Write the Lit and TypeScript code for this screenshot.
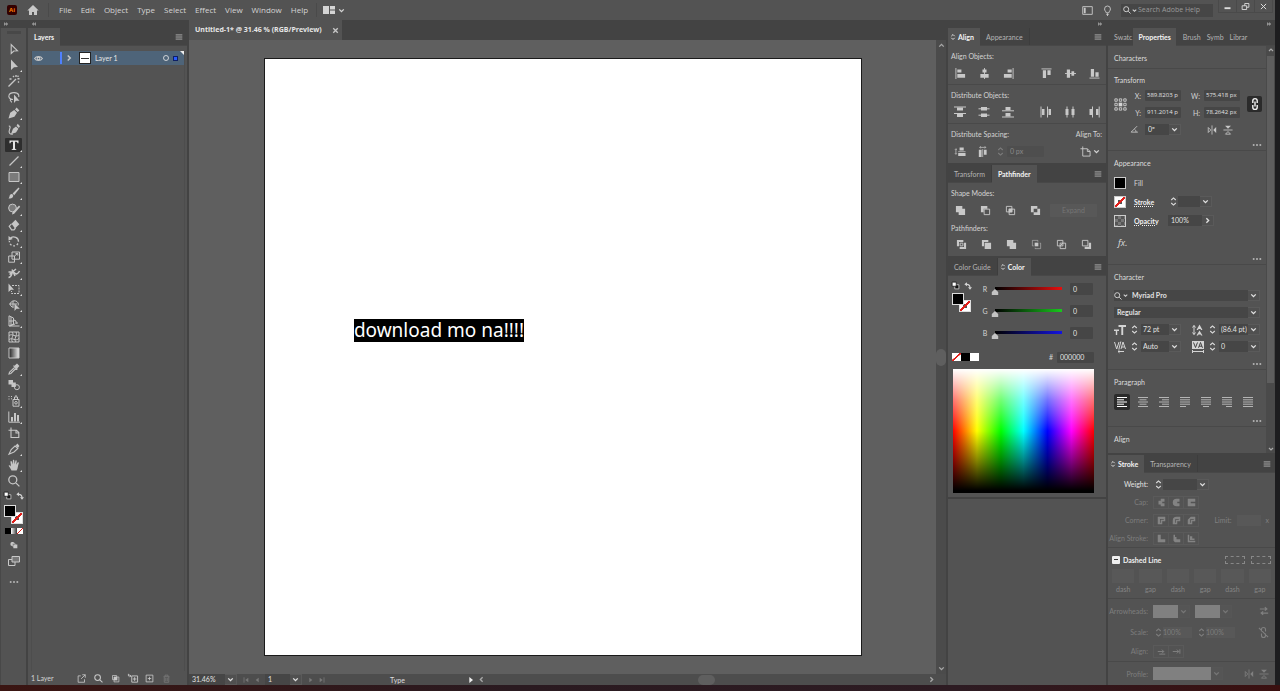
import { LitElement, html, svg, css, nothing, TemplateResult } from "lit";
import { customElement, state } from "lit/decorators.js";
import { classMap } from "lit/directives/class-map.js";
import { styleMap } from "lit/directives/style-map.js";

type Glyph = ReturnType<typeof svg>;

// All glyphs are drawn on a 12 x 12 grid; "f" is filled, "s" is stroked.
const f = (d: string): Glyph => svg`<path d=${d} fill="currentColor"/>`;
const s = (d: string, w = 1): Glyph =>
  svg`<path d=${d} fill="none" stroke="currentColor" stroke-width=${w}/>`;
const fs = (fill: string, line: string, w = 1): Glyph => svg`${f(fill)}${s(line, w)}`;

const GLYPHS: Record<string, Glyph> = {
  home: f("M6 1L0.3 6.4H2V11H5V8H7V11H10V6.4H11.7Z"),
  workspace: f("M0 2H6V10H0ZM7 2H12V5.5H7ZM7 6.5H12V10H7Z"),
  chevron: s("M3 4.5L6 7.5L9 4.5", 1.8),
  right: s("M4.5 3L7.5 6L4.5 9", 1.8),
  left: s("M7.5 3L4.5 6L7.5 9", 1.8),
  up: s("M3 7.5L6 4.5L9 7.5", 1.8),
  updown: s("M3 4L6 1.2L9 4M3 8L6 10.8L9 8", 1.5),
  tabmark: s("M4 5L6 3L8 5M4 7L6 9L8 7", 1),
  menu: s("M2 3.5H10M2 6H10M2 8.5H10", 1),
  collapse: s("M6 3.5L3 6L6 8.5M10 3.5L7 6L10 8.5", 1.6),
  expand: s("M2 3.5L5 6L2 8.5M6 3.5L9 6L6 8.5", 1.6),
  dots: f("M1 5H3V7H1ZM5 5H7V7H5ZM9 5H11V7H9Z"),
  close: s("M3 3L9 9M9 3L3 9", 1.8),
  thinclose: s("M2.5 2.5L9.5 9.5M9.5 2.5L2.5 9.5", 1.3),
  minimize: f("M2 7H10V9.5H2Z"),
  restore: s("M1.5 5H7.5V10H1.5ZM5 5V2H10.5V7H7.5", 1.2),
  sidebar: fs("M2 3H4V9H2Z", "M0.8 1.8H11.2V10.2H0.8Z"),
  bulb: s("M4.5 8.5C4.5 7 2.8 6.4 2.8 4.3A3.2 3.2 0 0 1 9.2 4.3C9.2 6.4 7.5 7 7.5 8.5ZM4.7 10.3H7.3M6 9V12", 1),
  search: s("M7.8 7.8L11.3 11.3M8.6 4.8A3.8 3.8 0 1 1 1 4.8A3.8 3.8 0 1 1 8.6 4.8", 1.4),
  // toolbar
  select: s("M3.2 1.5V10.5L5.8 8L9.5 7.8Z", 1.1),
  direct: f("M3 0.5V11L6 8.3L10 8Z"),
  wand: s("M0.5 11.5L8 4M8 0V2M11.5 3.8H9.5M5 1L6 2M10.5 0.8L9.5 1.8M10 6.5L11 7.5M1.5 4H3.5", 1.4),
  lasso: fs("M6 3.5V12L8 9.8H11.5Z", "M5 8.5C1 8.5 0.5 5.5 1 4.2C2 1 9.5 0.5 10.7 4C11 5 11 5.5 10.6 6M3 8C1 10 4 10 3.5 11.5", 1.1),
  pen: f("M0.5 11.5L2.2 5.8L6.2 3L9 5.8L6.4 9.8ZM7 2.4L8.6 0.6L11.4 3.4L9.7 5Z"),
  curvature: fs("M3 11L5 5.8L8 3.5L10.4 5.8L8 9.5ZM8.6 2.8L9.7 0.8L12 3.2L10.8 4.9Z", "M0.8 3C3 3 2 5 1.4 7C0.4 10 2 11.5 5 11", 1.1),
  type: f("M1.5 1.5H10.5V4.3H9.5C9.3 3 9 2.7 7 2.7V9C7 10 7.3 10.2 8.3 10.3V11H3.7V10.3C4.7 10.2 5 10 5 9V2.7C3 2.7 2.7 3 2.5 4.3H1.5Z"),
  line: s("M1.5 10.5L10.5 1.5", 1.3),
  rect: svg`<path d="M1 1.5H11V10.5H1Z" fill="#7b7b7b" stroke="currentColor"/>`,
  brush: f("M0.5 11.5C2 10 1 8 3 7.2C4.5 6.8 5.8 8 5 9.7C4.2 11.3 2 11.6 0.5 11.5ZM4.6 6.4L10.5 0.5L11.5 1.5L6.2 8.2Z"),
  shaper: svg`<path d="M8.4 5A3.9 3.9 0 1 1 0.6 5A3.9 3.9 0 1 1 8.4 5" fill="#7b7b7b" stroke="currentColor"/>${f("M4.5 9.5L11 2.5L12.2 3.7L6.2 10.8L4 11.4Z")}`,
  eraser: fs("M3.5 4.8L7.5 0.8L11.3 5.2L7 9.5Z", "M3.5 4.8L1.2 7.2L3.6 10.8H6L7.5 9", 1.2),
  rotate: fs("M0.5 1V5.5L4.8 4Z", "M2.5 3.2C5.5 0.5 10.8 2.5 10.5 6.8M10 8.5L8.8 10M7 10.8L5.2 10.9M3.5 10.3L2 9M1.4 7.3V6", 1.3),
  scale: s("M4 1H11.5V8.2H4ZM0.7 5H6.5V11.2H0.7ZM6.5 5L9.6 2.5M7.5 2.4H9.8V4.6", 1),
  width: s("M0.5 10.5C5 10 3 3 6 5.5C8 8 10 7 11.5 4M1.5 7.5L8 2M4 2.5L7 9M0.5 5H4", 1.5),
  free: svg`${f("M0.5 0.5V9L3 6.8H6Z")}<path d="M4 2.5H11V10.5H3.5V8" fill="none" stroke="currentColor" stroke-dasharray="2 1"/>`,
  shapebuild: fs("M6.5 4.5V12L8.5 9.8H11.8Z", "M5.5 8.5A4 3.4 0 1 1 10 6.5M1 5H9M5 2V8", 1),
  perspective: s("M1 0.8V11H11.5M1 0.8L5.5 3V9L1 11M1 6H6M3 2V10M6 5L8 6V9M8 8H10M2 11L7 9", 1),
  mesh: svg`${s("M1 1H11V11H1ZM1 4.5C5 2 7 7 11 4M1 8.5C5 6 7 11 11 7.5M4 1C7 4 2 7 4.5 11M8 1C10 4 5 8 8 11", 1)}`,
  gradient: svg`<defs><linearGradient id="g"><stop offset="0" stop-color="#222"/><stop offset="1" stop-color="#eee"/></linearGradient></defs><path d="M1 1H11V11H1Z" fill="url(#g)" stroke="currentColor"/>`,
  dropper: fs("M6.2 3L9 0.6L11.4 3L9 5.8Z", "M7 4L1.5 9.2L1 11L2.8 10.5L8.3 5M5.5 2.6L9.4 6.5", 1.1),
  blend: fs("M0.5 1H5V5.5H0.5ZM3.5 3.5H7.8V8H3.5Z", "M11.4 8.2A2.5 2.5 0 1 1 6.4 8.2A2.5 2.5 0 1 1 11.4 8.2", 1),
  spray: s("M5 4.5H11V11.2H5ZM6.5 4.5V2H9.5V4.5M9.3 7.8A1.3 1.3 0 1 1 6.7 7.8A1.3 1.3 0 1 1 9.3 7.8M0.5 1.5H1.5M3 1.5H4M0.5 4H1.5M3 3.8H4M7 1H9", 1),
  graph: fs("M3 6H5V10.5H3ZM6 2H8V10.5H6ZM9 4H11V10.5H9Z", "M0.8 0.5V11.2H12", 1),
  artboard: s("M3 0.5V10.5H10.8V5.5L8.5 3.2H0.5M8 3.5V6H10.5", 1.1),
  slice: fs("M7.5 2.5L9.5 0.6L11.4 3L10 5Z", "M7 3L9.8 5.4L6 9L1 11.2L3.2 6.5Z", 1.1),
  hand: f("M3.5 11.5C2.5 9.5 1.5 8 0.6 6.8C1 5.8 2.2 6.2 3 7.4L2.4 2.6C2.9 1.7 3.7 2 4 3L4.6 5.4L4.9 1.2C5.4 0.4 6.2 0.6 6.3 1.4L6.5 5.2L7.5 1.5C8.2 0.9 8.8 1.3 8.7 2.2L8.2 5.8L9.8 3.3C10.6 3 11 3.6 10.7 4.4C9.8 6.5 10 9.5 8.6 11.5Z"),
  zoom: s("M7.6 7.6L11.4 11.4M8.8 4.8A4 4 0 1 1 0.8 4.8A4 4 0 1 1 8.8 4.8", 1.3),
  defaults: svg`<path d="M5 5H10.5V10.5H5Z" fill="#111" stroke="#ddd"/><path d="M1.5 1.5H7V7H1.5Z" fill="#fff" stroke="#111"/>`,
  swap: fs("M0.5 3.5L4.5 0.5V6.5ZM9 11.8L6 8H12Z", "M4 3.5C7.5 3.5 9 5 9 8.5", 1.7),
  drawmode: fs("M5 5.2H11V11H5ZM4.2 1.5A3 3 0 1 0 4 7.4V4H7.2A3 3 0 0 0 4.2 1.5", "M3.8 4.2H8V8H3.8Z", 0.7),
  screen: svg`<path d="M0.5 4.5H7V10.5H0.5Z" fill="none" stroke="currentColor"/><path d="M4 1.5H11.5V7H4Z" fill="#777" stroke="currentColor"/>`,
  // layers panel
  eye: s("M0.8 6C3 2.5 9 2.5 11.2 6C9 9.5 3 9.5 0.8 6ZM7.7 6A1.7 1.7 0 1 1 4.3 6A1.7 1.7 0 1 1 7.7 6", 1.4),
  ring: s("M9 6A3 3 0 1 1 3 6A3 3 0 1 1 9 6", 1),
  export: s("M5 2.5H1.5V11H10V7M5.5 6.5L11 1M7 1H11V5", 1.1),
  clip: fs("M4 4H8.5V8.5H4Z", "M2 2H7.5V4M2 2V7.5H4M4 4H10.5V10.5H4Z", 1),
  sublayer: s("M4.5 3.5H11.5V11H4.5ZM8 5V9.5M5.8 7.2H10.2M0.5 1V3.5H3M2 5L3.5 3.5L2 2", 1.1),
  add: s("M1.5 1.5H10.5V10.5H1.5ZM6 3.7V8.3M3.7 6H8.3", 1.1),
  trash: s("M2 3.5H10M4 3V1.5H8V3M3 4V11H9V4M5 5V9.5M7 5V9.5", 1),
  // status bar
  first: fs("M9.5 2.5V9.5L5 6Z", "M3 2V10", 1.2),
  prev: f("M8.5 2.5V9.5L4 6Z"),
  next: f("M3.5 2.5V9.5L8 6Z"),
  last: fs("M2.5 2.5V9.5L7 6Z", "M9 2V10", 1.2),
  play: f("M3.5 1.5V10.5L9 6Z"),
  // align
  alLeft: fs("M2.5 1.5H7V5H2.5ZM2.5 6.5H11V10.5H2.5Z", "M1 0V12"),
  alHc: fs("M3.8 1.5H8.2V5H3.8ZM1.5 6.5H10.5V10.5H1.5Z", "M6 0V12"),
  alRight: fs("M5 1.5H9.5V5H5ZM1 6.5H9.5V10.5H1Z", "M11 0V12"),
  alTop: fs("M2 2.5H5.5V11H2ZM7 2.5H10.5V7.5H7Z", "M0.5 1H11.5"),
  alVc: fs("M2 1.5H5.5V10.5H2ZM7 3.5H10V8.5H7Z", "M0 6H12"),
  alBot: fs("M2 1H5.5V9.5H2ZM7 4.5H10.5V9.5H7Z", "M0.5 11H11.5"),
  diTop: fs("M3 1.5H9V4.5H3ZM3 8H9V11H3Z", "M0 1H12M0 7.5H12"),
  diVc: fs("M3 1H9V4.5H3ZM3 7.5H9V11H3Z", "M0.5 2.8H11.5M0.5 9.2H11.5"),
  diBot: fs("M3.5 1H8.5V4.2H3.5ZM3.5 7H8.5V10.5H3.5Z", "M0 4.8H12M0 11H12"),
  diLeft: fs("M2 3H4.5V9H2ZM8.5 3H11V9H8.5Z", "M1 0.5V11.5M7.5 0.5V11.5"),
  diHc: fs("M1.5 3H4.5V9H1.5ZM7.5 3H10.5V9H7.5Z", "M3 0.5V11.5M9 0.5V11.5"),
  diRight: fs("M1.5 3H4V9H1.5ZM8 3H10.5V9H8Z", "M4.5 0.5V11.5M11.2 0.5V11.5"),
  spV: fs("M5 1.5H9.5V5H5ZM3.5 7.5H11.5V11H3.5Z", "M3.5 6.2H11.5M1 3V9M0 4L1 3L2 4M0 8L1 9L2 8", 0.8),
  spH: fs("M2 4H5V12H2ZM7.5 4H10.5V9.5H7.5Z", "M6.2 3.5V12M3 1.5H9.5M4 0.3L3 1.5L4 2.7M8.5 0.3L9.5 1.5L8.5 2.7", 0.8),
  alignTo: s("M3 0.5V11H11V6L8 3H0.5M8 3V6H11", 1),
  // pathfinder
  unite: f("M1 1H8V4H11V11H4V8H1Z"),
  minus: fs("M1 1H8V4H4V8H1Z", "M4.5 4.5H10.5V10.5H4.5Z"),
  intersect: fs("M4 4H8V8H4Z", "M1.5 1.5H7.5V7.5H1.5ZM4.5 4.5H10.5V10.5H4.5Z"),
  exclude: f("M1 1H8V4H4V8H1ZM8 4H11V11H4V8H8Z"),
  divide: svg`<path d="M1 1H8V3.3H3.3V8H1ZM8.7 4H11V11H4V8.7H8.7Z" fill="currentColor"/>${s("M4.5 4.5H7.5V7.5H4.5Z", 1)}`,
  trim: f("M1 1H8V3.3H3.3V8H1ZM4 4H11V11H4Z"),
  merge: f("M1 1H8V4H11V11H4V8H1Z"),
  crop: svg`${f("M4 4H8V8H4Z")}<path d="M1.5 1.5H7.5V3M1.5 1.5V7.5H3M9.5 4.5H10.5V10.5H4.5V9.5" fill="none" stroke="currentColor" opacity=".6"/>`,
  outline: s("M1.5 1.5H7.5V7.5H1.5ZM4.5 4.5H10.5V10.5H4.5ZM4.5 7.5L7.5 4.5"),
  back: fs("M8.5 4H11V11H4V8.5H8.5Z", "M1.5 1.5H7.5V7.5H1.5Z"),
  // properties
  refpoint: svg`${s("M0.8 0.8H3V3H0.8ZM4.9 0.8H7.1V3H4.9ZM9 0.8H11.2V3H9ZM0.8 4.9H3V7.1H0.8ZM9 4.9H11.2V7.1H9ZM0.8 9H3V11.2H0.8ZM4.9 9H7.1V11.2H4.9ZM9 9H11.2V11.2H9Z", 0.8)}${f("M4.3 4.3H7.7V7.7H4.3Z")}`,
  link: s("M3.8 5V2.8A2.2 2.2 0 0 1 8.2 2.8V5M3.8 7V9.2A2.2 2.2 0 0 0 8.2 9.2V7M6 3.5V8.5", 1.4),
  unlink: s("M3.8 5V2.8A2.2 2.2 0 0 1 8.2 2.8V5M3.8 7V9.2A2.2 2.2 0 0 0 8.2 9.2V7M1 1L11 11", 1.2),
  angle: s("M9.5 1.5L1.5 9.5H10.5M6 5.5C7.5 6.5 8 8 8 9.5", 1.1),
  flipH: fs("M11 2.5V9.5L7.5 6Z", "M6 0.5V11.5M1.5 3V9L4.5 6Z", 1),
  flipV: fs("M2.5 1H9.5L6 4.5Z", "M0.5 6H11.5M3 11H9L6 7.8Z", 1),
  size: f("M0 5.5H5V7H3.2V11H1.8V7H0ZM4.5 1H12V3H9.2V11H7.3V3H4.5Z"),
  leading: fs("M4.5 6L7.5 0.5L10.5 6H9L8.5 5H6.5L6 6ZM4.5 11.5L7.5 6.5L10.5 11.5H9L8.5 10.5H6.5L6 11.5Z", "M2 1.5V10.5M0.5 3.5L2 1.5L3.5 3.5M0.5 8.5L2 10.5L3.5 8.5", 1),
  kerning: s("M0.5 1L2.7 8L5 1M7 8L9 1L11.5 8M7.8 6H10.5M6.8 0.5L4.8 8.5M4 10.5H10M5.5 9.2L4 10.5L5.5 11.8", 1),
  tracking: svg`<path d="M0 0H12V8H0Z" fill="currentColor"/><path d="M1.5 1.5L3.5 6.5L5.5 1.5M6.5 6.8L8.5 1.5L10.5 6.8M7 5.2H10" fill="none" stroke="#444"/>${s("M0.5 9V12M11.5 9V12M1 10.5H11")}`,
  pLeft: s("M1 1.5H11M1 3.8H8M1 6H11M1 8.2H8M1 10.5H11"),
  pCenter: s("M1 1.5H11M2.5 3.8H9.5M1 6H11M2.5 8.2H9.5M1 10.5H11"),
  pRight: s("M1 1.5H11M4 3.8H11M1 6H11M4 8.2H11M1 10.5H11"),
  pJust: s("M1 1.5H11M1 3.8H11M1 6H11M1 8.2H11M1 10.5H7"),
  pJustC: s("M1 1.5H11M1 3.8H11M1 6H11M1 8.2H11M3 10.5H9"),
  pJustR: s("M1 1.5H11M1 3.8H11M1 6H11M1 8.2H11M5 10.5H11"),
  pJustA: s("M1 1.5H11M1 3.8H11M1 6H11M1 8.2H11M1 10.5H11"),
  // stroke
  capButt: f("M5 1H10V5H7V7H10V11H5V8.5H2V3.5H5Z"),
  capRound: f("M6 1H10V5H7V7H10V11H6A5 5 0 0 1 6 1Z"),
  capSquare: svg`<path d="M1 1H11V11H1ZM5 5V7H11V5Z" fill="currentColor" fill-rule="evenodd"/>`,
  corMiter: svg`<path d="M1 1H11V7H7V11H1ZM4 4V9H5V5H9V4Z" fill="currentColor" fill-rule="evenodd"/>`,
  corRound: svg`<path d="M6 1H11V7H7V11H1V6A5 5 0 0 1 6 1ZM4 5V9H5V5H9V4H5Z" fill="currentColor" fill-rule="evenodd"/>`,
  corBevel: svg`<path d="M5 1H11V7H7V11H1V5ZM4 5V9H5V5H9V4H5Z" fill="currentColor" fill-rule="evenodd"/>`,
  strC: f("M1 1H5V7H11V11H1Z"),
  strI: f("M2 1H4V4H6V7H11V9H2ZM2 9H11V11H4Z"),
  strO: f("M1 1H3V9H11V11H1ZM4 3H7V6H10V8H4Z"),
  exchange: s("M1 3.5H9.5M7 1.5L9.5 3.5L7 5.5M11 8.5H2.5M5 6.5L2.5 8.5L5 10.5", 1.3),
  arrowA: s("M1 6H9M6.5 3.5L9 6L6.5 8.5M3 9.5H11", 1.2),
  arrowB: s("M1 6H9M6.5 3.5L9 6L6.5 8.5M10.5 3V9", 1.2),
};

const icon = (name: string, size = 10): TemplateResult =>
  html`<svg class="ic" width=${size} height=${size} viewBox="0 0 12 12" aria-hidden="true">${GLYPHS[name]}</svg>`;

const iconButton = (name: string, label: string, size = 10, cls = ""): TemplateResult =>
  html`<button class="ib ${cls}" aria-label=${label}>${icon(name, size)}</button>`;

const drop = (label: string, value: string, cls = "", disabled = false, arrow = "chevron"): TemplateResult =>
  html`<span class="drop ${cls}">
    <select aria-label=${label} ?disabled=${disabled}><option>${value}</option></select>
    <span class="arrow">${icon(arrow, 9)}</span>
  </span>`;

const moreRow = (): TemplateResult => html`<div class="more">${iconButton("dots", "More options", 10)}</div>`;

interface Tool { id: string; label: string; group?: boolean }

const TOOLS: Tool[] = [
  { id: "select", label: "Selection" },
  { id: "direct", label: "Direct Selection", group: true },
  { id: "wand", label: "Magic Wand" },
  { id: "lasso", label: "Lasso" },
  { id: "pen", label: "Pen", group: true },
  { id: "curvature", label: "Curvature" },
  { id: "type", label: "Type", group: true },
  { id: "line", label: "Line Segment", group: true },
  { id: "rect", label: "Rectangle", group: true },
  { id: "brush", label: "Paintbrush", group: true },
  { id: "shaper", label: "Shaper", group: true },
  { id: "eraser", label: "Eraser", group: true },
  { id: "rotate", label: "Rotate", group: true },
  { id: "scale", label: "Scale", group: true },
  { id: "width", label: "Width", group: true },
  { id: "free", label: "Free Transform", group: true },
  { id: "shapebuild", label: "Shape Builder", group: true },
  { id: "perspective", label: "Perspective Grid", group: true },
  { id: "mesh", label: "Mesh" },
  { id: "gradient", label: "Gradient" },
  { id: "dropper", label: "Eyedropper", group: true },
  { id: "blend", label: "Blend" },
  { id: "spray", label: "Symbol Sprayer", group: true },
  { id: "graph", label: "Column Graph", group: true },
  { id: "artboard", label: "Artboard" },
  { id: "slice", label: "Slice", group: true },
  { id: "hand", label: "Hand", group: true },
  { id: "zoom", label: "Zoom" },
];

const MENUS = ["File", "Edit", "Object", "Type", "Select", "Effect", "View", "Window", "Help"];

@customElement("app-root")
export class AppRoot extends LitElement {
  @state() private tool = "type";

  static styles = css`
    :host {
      display: flex;
      flex-direction: column;
      height: 100vh;
      overflow: hidden;
      background: linear-gradient(90deg, #3a1512, #2a1a20 40%, #2d1b22 75%, #3a1010);
      color: #d4d4d4;
      font: 7px/10px Lato, "Open Sans", sans-serif;
    }
    * { box-sizing: border-box; }
    button, input, select {
      font: inherit;
      color: inherit;
      border: 0;
      margin: 0;
      padding: 0;
      background: none;
      border-radius: 0;
      appearance: none;
      min-width: 0;
      outline: none;
    }
    .ic { display: block; flex: none; overflow: visible; }
    .ib { display: grid; place-items: center; flex: none; color: #c8c8c8; }
    .fill { flex: 1; min-width: 0; }
    .frame { display: flex; flex: 1; min-height: 0; padding-bottom: 6px; }
    .window {
      display: flex;
      flex-direction: column;
      flex: 1;
      min-width: 0;
      background: #535353;
    }
    .desktop { width: 5px; background: #1d1d1f; }

    /* menu bar */
    .menubar {
      display: flex;
      align-items: center;
      height: 20px;
      flex: none;
      padding-left: 7px;
      font: 8px/12px "Open Sans", sans-serif;
      background: #535353;
    }
    .badge {
      width: 10px;
      height: 10px;
      margin-right: 10px;
      border-radius: 2px;
      background: #330000;
      color: #ff7c00;
      font: 700 6px/10px "Open Sans", sans-serif;
      text-align: center;
    }
    .sep { width: 1px; height: 14px; background: #4a4a4a; }
    .menus { display: flex; gap: 9px; padding: 0 8px 0 10px; }
    .menubar .sep.a { margin-left: 9px; }
    .spaces { display: flex; align-items: center; gap: 2px; padding-left: 6px; }
    .helpers { display: flex; gap: 9px; }
    .help {
      display: flex;
      align-items: center;
      width: 92px;
      height: 13px;
      margin: 0 6px 0 8px;
      padding-left: 2px;
      background: #464646;
      font: 7px/12px "Open Sans", sans-serif;
    }
    .help input { width: 70px; color: #a6a6a6; }
    .help input::placeholder { color: #9a9a9a; opacity: 1; }
    .winbtns { display: flex; align-self: flex-start; padding-right: 2px; }
    .winbtns .ib { width: 19px; height: 13px; border: 1px solid #4a4a4a; border-top: 0; margin-left: -1px; color: #ddd; }

    /* main columns */
    .main { display: flex; flex: 1; min-height: 0; background: #434343; }
    .dockhead { display: flex; align-items: center; height: 8px; flex: none; padding: 0 3px; color: #ddd; background: #434343; }
    .dockhead.end { justify-content: flex-end; }
    .col { display: flex; flex-direction: column; flex: none; }
    .tools { width: 26px; }
    .toolbar {
      display: flex;
      flex-direction: column;
      flex: 1;
      align-items: center;
      background: #535353;
      border-left: 1px solid #484848;
    }
    .grip { width: 14px; height: 3px; margin: 3px 0 7px; background: #484848; flex: none; }
    .tool {
      position: relative;
      display: grid;
      place-items: center;
      width: 19px;
      height: 16px;
      flex: none;
      color: #c6c6c6;
      border: 1px solid transparent;
      border-radius: 2px;
    }
    .tool.on { background: #2e2e2e; background-clip: padding-box; color: #e4e4e4; }
    .tool.group::after {
      content: "";
      position: absolute;
      right: 0;
      bottom: 0;
      border: 1px solid;
      border-color: transparent #ddd #ddd transparent;
    }
    .toolpair { display: flex; justify-content: space-between; align-items: center; width: 21px; height: 13px; margin-bottom: 3px; flex: none; }
    .swatches { position: relative; width: 19px; height: 19px; flex: none; }
    .sw { position: absolute; width: 12px; height: 12px; border: 1px solid #ddd; }
    .sw.fillc { left: 0; top: 0; background: #000; }
    .none { background: linear-gradient(to bottom right, #fff 42%, #e0201b 44%, #e0201b 56%, #fff 58%); }
    .sw.strokec { right: 0; bottom: 0; }
    .sw.strokec::after, .hollow::after {
      content: "";
      position: absolute;
      inset: 3px;
      background: linear-gradient(to bottom right, #535353 30%, #e0201b 32%, #e0201b 68%, #535353 70%);
    }
    .modes { display: flex; width: 18px; height: 6px; margin: 4px 0 3px; flex: none; }
    .modes button { width: 6px; height: 6px; }
    .black { background: #000; }
    .white { background: #fff; }
    .grad { background: linear-gradient(90deg, #fff, #333); }
    .toolbar .ib { height: 16px; width: 19px; }
    .toolbar .ib.last { margin-top: 5px; }

    /* panels */
    .tabs { display: flex; height: 18px; flex: none; background: #434343; border-bottom: 1px solid #484848; }
    .tab {
      display: flex;
      align-items: center;
      padding: 0 6px;
      color: #b4b4b4;
      border-right: 1px solid #3d3d3d;
      white-space: nowrap;
    }
    .tab.on { height: 18px; background: #535353; color: #f4f4f4; font-weight: 700; border-right: 0; }
    .tab.mark { padding-left: 0; }
    .tabs .ib { margin-left: auto; width: 16px; color: #bbb; }
    .tabs.tight .tab { padding: 0 3px; border-right: 0; }
    .tabs.tight .tab:first-child { padding: 0 1px 0 6px; }
    .tabs.tight .tab.on { padding: 0 5px; margin-right: 4px; }
    .panel { display: flex; flex-direction: column; background: #535353; flex: none; }
    .panel.grow { flex: 1; min-height: 0; }
    .layers { width: 159px; margin: 0 2px 0 2px; }
    .list { flex: 1; margin: 5px 2px 0 3px; border: solid #4d4d4d; border-width: 0 1px; }
    .layer {
      position: relative;
      display: flex;
      align-items: center;
      height: 14px;
      padding-left: 2px;
      background: #4e6479;
      color: #e6e6e6;
    }
    .bar { width: 2px; height: 12px; margin: 0 2px 0 17px; background: #4f80ff; }
    .thumb {
      width: 12px;
      height: 12px;
      margin: 0 4px 0 5px;
      border: 1px solid #222;
      background: linear-gradient(#333, #333) center / 8px 1px no-repeat #fff;
    }
    .sq { width: 5px; height: 5px; margin: 0 6px 0 2px; background: #2a5cff; border: 1px solid #0d1f66; }
    .corner { position: absolute; right: 0; top: 0; border: 2px solid; border-color: #eee #eee transparent transparent; }
    .foot { display: flex; align-items: center; height: 14px; padding: 0 12px 0 3px; }
    .foot .ib { width: 17px; }
    .dim { opacity: .35; }

    /* document */
    .doc { display: flex; flex-direction: column; flex: 1; min-width: 0; }
    .doctabs { display: flex; height: 20px; background: #434343; flex: none; }
    .doctab {
      display: flex;
      align-items: center;
      gap: 9px;
      padding: 0 2px 0 6px;
      background: #535353;
      color: #e6e6e6;
      font: 700 7px/12px "Open Sans", sans-serif;
      white-space: nowrap;
    }
    .work { display: flex; flex: 1; min-height: 0; }
    .canvas { display: flex; justify-content: center; flex: 1; min-width: 0; padding: 18px 0; background: #5f5f5f; }
    .artboard { position: relative; height: 100%; aspect-ratio: 1; background: #fff; border: 1px solid #1a1a1a; }
    .art {
      position: absolute;
      left: 15%;
      top: 43.6%;
      background: #000;
      color: #fff;
      font: 19px/23px "Noto Sans", sans-serif;
      white-space: nowrap;
    }
    .vbar { display: flex; flex-direction: column; justify-content: space-between; align-items: center; width: 10px; padding: 1px 0; background: #4b4b4b; color: #a8a8a8; }
    .vthumb { width: 10px; height: 17px; border-radius: 5px; background: #5f5f5f; }
    .status { display: flex; align-items: center; height: 11px; flex: none; background: #4d4d4d; padding-right: 10px; }
    .status .ib { width: 11px; }
    .status .pager { display: flex; padding: 0 3px; }
    .status .ib.play { color: #eee; margin-right: 1px; }
    .mode { flex: none; width: 135px; text-align: center; color: #ddd; }
    .hbar { display: flex; align-items: center; justify-content: space-between; flex: 1; color: #a8a8a8; }
    .hthumb { width: 17px; height: 10px; border-radius: 5px; background: #5f5f5f; }

    /* fields */
    .drop { display: grid; grid-template-columns: minmax(0, 1fr) 12px; height: 11px; background: #464646; color: #e2e2e2; flex: none; }
    .drop select { grid-area: 1 / 1 / 2 / 3; width: 100%; height: 11px; padding-left: 3px; opacity: 1; line-height: 11px; }
    .drop .arrow { grid-area: 1 / 2; display: grid; place-items: center; pointer-events: none; background: #505050; border: 1px solid #5a5a5a; border-left: 0; }
    .field { height: 11px; padding: 0 3px; background: #464646; color: #e2e2e2; border-radius: 1px; }
    .w48 { width: 48px; } .w37 { width: 37px; } .w46 { width: 46px; }
    .w34 { width: 34px; } .w29 { width: 29px; } .w24 { width: 24px; }

    /* middle dock */
    .dock-a { width: 158px; margin: 0 1px 0 2px; }
    .dock-a .panel { margin-bottom: 2px; }
    .dock-a .panel.grow { margin-bottom: 0; }
    .lab { display: flex; align-items: center; justify-content: space-between; height: 12px; padding: 0 4px 0 3px; }
    .lab.first { height: 17px; padding-top: 3px; }
    .icons { display: flex; height: 22px; align-items: center; padding-bottom: 2px; }
    .icons .ib { width: 24px; }
    .rule { border-bottom: 1px solid #494949; padding-bottom: 1px; }
    .spacing { padding-right: 5px; }
    .spacing .ib { width: 21px; }
    .spacing .ib.first { width: 24px; }
    .spacing .ib.s { width: 14px; }
    .pf .ib { width: 25px; }
    .pf.second { padding-left: 1px; }
    .expandbtn { width: 47px; height: 13px; margin-left: 2px; background: #585858; color: #757575; border-radius: 1px; }
    .color { display: grid; grid-template-columns: 31px minmax(0, 1fr); padding-top: 2px; }
    .pair { display: flex; justify-content: space-between; padding: 0 7px 0 3px; height: 15px; align-items: center; }
    .color .swatches { margin-left: 4px; }
    .chan { display: flex; align-items: center; height: 22px; }
    .chan label { width: 12px; text-align: center; }
    .chan input.field { margin-left: 4px; width: 23px; height: 12px; }
    .slider { width: 75px; height: 12px; }
    .slider::-webkit-slider-runnable-track {
      height: 10px;
      background: linear-gradient(90deg, #000, var(--to)) 4px 3px / calc(100% - 8px) 3px no-repeat;
    }
    .slider::-webkit-slider-thumb {
      appearance: none;
      width: 8px;
      height: 6px;
      margin-top: 5px;
      background: #c4c4c4;
      clip-path: polygon(50% 0, 90% 50%, 90% 100%, 10% 100%, 10% 50%);
    }
    .hexrow { display: flex; align-items: center; height: 12px; margin: 7px 12px 6px 4px; }
    .hexrow .chip { width: 9px; height: 8px; }
    .hexrow label { margin-left: auto; padding-right: 4px; }
    .spectrum {
      height: 124px;
      margin: 0 12px 4px 5px;
      background: linear-gradient(#fff, rgba(255, 255, 255, .45) 25%, transparent 50%, rgba(0, 0, 0, .5) 75%, #000 98%),
        linear-gradient(90deg, #f00, #ff0 17%, #0f0 34%, #0ff 50%, #00f 67%, #f0f 84%, #f00);
    }

    /* right dock */
    .dock-b { width: 168px; border-left: 1px solid #434343; }
    .scroller { display: flex; flex: 1; min-height: 0; overflow: hidden; }
    .props { flex: 1; min-width: 0; padding-left: 6px; }
    .sbar { display: flex; flex-direction: column; align-items: center; justify-content: space-between; width: 9px; background: #4a4a4a; color: #aaa; }
    .sbar .th { flex: 1; width: 7px; margin: 2px 0 62px; background: #5e5e5e; }
    .sec { border-bottom: 1px solid #494949; margin-left: -6px; padding-left: 6px; }
    .head { height: 22px; padding-top: 2px; display: flex; align-items: center; color: #dcdcdc; }
    .head.low { height: 18px; padding-top: 4px; }
    .r { display: flex; align-items: center; height: 19px; }
    .more { display: flex; justify-content: flex-end; align-items: flex-end; height: 14px; padding: 0 4px 2px 0; color: #ccc; }
    .more.short { height: 12px; }
    .more .ib { height: 8px; }
    .xf { display: grid; grid-template-columns: 14px 17px 36px 23px 36px 1fr; grid-auto-rows: 17px; align-items: center; margin-bottom: -2px; }
    .xf .ref { grid-row: 1 / 3; }
    .xf label { text-align: right; padding-right: 4px; }
    .xf .linkb { grid-row: 1 / 3; grid-column: 6; width: 15px; height: 16px; margin-left: 7px; background: #2b2b2b; color: #f2f2f2; border-radius: 2px; }
    .xf .field { width: 100%; padding: 0 2px; font: 6px/11px "Open Sans", sans-serif; }
    .flips { grid-column: 4 / 7; display: flex; gap: 6px; padding-left: 26px; }
    .xf .ang { padding-left: 16px; grid-column: 1 / 3; color: #ccc; }
    .xf .drop { width: 36px; }
    .chipb { position: relative; width: 12px; height: 12px; margin-right: 8px; border: 1px solid #ccc; flex: none; }
    .checker { background: repeating-conic-gradient(#777 0 25%, #555 0 50%) 0 0 / 6px 6px; }
    .nm { width: 34px; }
    .link { color: #f0f0f0; text-decoration: underline dotted; text-underline-offset: 1px; font-weight: 700; }
    .step { display: grid; place-items: center; width: 10px; height: 11px; color: #ddd; flex: none; }
    .r.effects { height: 22px; padding-top: 3px; }
    .fx { font: italic 9px/12px "Open Sans", serif; color: #ddd; padding-left: 4px; }
    .fontdrop { display: flex; width: 146px; background: #464646; margin: 3px 0; align-items: center; }
    .fontdrop + .fontdrop { margin-top: 6px; }
    .fontdrop .drop { flex: 1; }
    .bold { font-weight: 700; }
    .ch { display: grid; grid-template-columns: 15px 12px 40px 11px 15px 12px 41px; height: 17px; align-items: center; }
    .ch .drop { width: auto; }
    .ch .drop select { padding-left: 2px; }
    .para { display: flex; gap: 5px; height: 20px; align-items: center; }
    .para .ib { width: 16px; height: 16px; border-radius: 2px; color: #b4b4b4; }
    .para .ib.on { background: #2b2b2b; color: #fff; }

    /* stroke panel */
    .stroke { margin-top: 2px; }
    .g { display: flex; align-items: center; height: 18px; color: #7d7d7d; }
    .g .l { width: 41px; text-align: right; padding-right: 1px; margin-right: 4px; flex: none; white-space: nowrap; }
    .g.live { color: #e4e4e4; height: 20px; padding-top: 2px; }
    .g .ib { width: 16px; height: 13px; border: 1px solid #5a5a5a; margin-right: -1px; color: #838383; }
    .g .ghost { background: #585858; height: 11px; }
    .g.t { height: 20px; }
    .g.heads { height: 24px; }
    .off { color: #7d7d7d; }
    .off .arrow { color: #777; background: #555; border-color: #565656; }
    .off select { background: #808080; opacity: 1; }
    .g .off { height: 13px; background: none; }
    .g .off select { height: 13px; }
    .g .off.arrowhead { width: 37px; margin-right: 5px; }
    .g .off.arrowhead select { width: 26px; }
    .g .off.profile { width: 70px; }
    .g .off.profile select { width: 59px; }
    .scales { display: flex; gap: 4px; }
    .scales > span { display: flex; }
    .scales .step { color: #7d7d7d; }
    .tail { margin-left: auto; display: flex; gap: 5px; padding-right: 6px; color: #808080; }
    .dash { display: flex; align-items: center; height: 22px; padding: 2px 4px 0; color: #f0f0f0; border-top: 1px solid #494949; font-weight: 700; }
    .dash input { display: grid; place-items: center; width: 8px; height: 8px; margin-right: 3px; background: #eee; border-radius: 1px; }
    .dash input::before { content: ""; width: 4px; height: 1px; background: #333; }
    .dash label { display: flex; align-items: center; }
    .dashicons { display: flex; margin-left: auto; gap: 6px; }
    .dashicons button { width: 20px; height: 8px; border: 1px dashed #888; }
    .six { display: grid; grid-template-columns: repeat(6, 1fr); gap: 5px; padding: 0 4px 4px; color: #858585; border-bottom: 1px solid #494949; text-align: center; }
    .six label { display: block; }
    .six input { display: block; width: 100%; height: 14px; margin-bottom: 1px; background: #585858; }
    .profilerow { border-top: 1px solid #494949; height: 24px; }
  `;

  private tab(name: string, on = false, mark = false) {
    return html`<button class="tab ${classMap({ on, mark })}" role="tab" aria-selected=${on}>
      ${mark ? icon("tabmark", 10) : nothing}${name}
    </button>`;
  }

  private channel(name: string, to: string) {
    return html`<div class="chan">
      <label for="v${name}">${name}</label>
      <input class="slider" type="range" min="0" max="255" .value=${"0"} aria-label="${name} slider" style=${styleMap({ "--to": to })} />
      <input class="field" id="v${name}" type="text" value="0" />
    </div>`;
  }

  private step(label: string) {
    return html`<button class="step" aria-label=${label}>${icon("updown", 9)}</button>`;
  }

  private swatches() {
    return html`<div class="swatches">
      <button class="sw strokec none" aria-label="Stroke colour"></button>
      <button class="sw fillc" aria-label="Fill colour"></button>
    </div>`;
  }

  private renderMenubar() {
    return html`<header class="menubar">
      <span class="badge">Ai</span>
      ${iconButton("home", "Home", 12)}
      <span class="sep a"></span>
      <nav class="menus">${MENUS.map((m) => html`<button>${m}</button>`)}</nav>
      <span class="sep"></span>
      <button class="spaces" aria-label="Arrange documents">${icon("workspace", 12)}${icon("chevron", 9)}</button>
      <span class="fill"></span>
      <span class="helpers">${iconButton("sidebar", "Workspace", 11)}${iconButton("bulb", "Learn", 11)}</span>
      <label class="help">${icon("search", 8)}${icon("chevron", 7)}
        <input type="text" placeholder="Search Adobe Help" aria-label="Search Adobe Help" />
      </label>
      <div class="winbtns">
        ${iconButton("minimize", "Minimize", 9)}${iconButton("restore", "Restore", 9)}${iconButton("thinclose", "Close", 9)}
      </div>
    </header>`;
  }

  private renderTools() {
    return html`<div class="col tools">
      <div class="dockhead">${icon("expand", 6)}</div>
      <div class="toolbar" role="toolbar">
        <div class="grip"></div>
        ${TOOLS.map(
          (t) => html`<button
            class="tool ${classMap({ on: t.id === this.tool, group: !!t.group })}"
            aria-label="${t.label} tool"
            @click=${() => (this.tool = t.id)}
          >${icon(t.id, 12)}</button>`
        )}
        <div class="toolpair">${icon("defaults", 9)}${icon("swap", 8)}</div>
        ${this.swatches()}
        <div class="modes">
          <button class="black" aria-label="Color"></button>
          <button class="grad" aria-label="Gradient"></button>
          <button class="none" aria-label="None"></button>
        </div>
        ${iconButton("drawmode", "Drawing mode", 8)}
        ${iconButton("screen", "Screen mode", 12)}
        ${iconButton("dots", "Edit toolbar", 10, "last")}
      </div>
    </div>`;
  }

  private renderLayers() {
    return html`<div class="col layers">
      <div class="dockhead">${icon("collapse", 6)}</div>
      <section class="panel grow">
        <div class="tabs">${this.tab("Layers", true)}${iconButton("menu", "Layers menu", 10)}</div>
        <div class="list">
          <div class="layer">
            ${iconButton("eye", "Toggle visibility", 9)}
            <span class="bar"></span>
            ${iconButton("right", "Expand layer", 10)}
            <span class="thumb"></span>
            <span class="fill">Layer 1</span>
            ${icon("ring", 10)}
            <span class="sq"></span>
            <span class="corner"></span>
          </div>
        </div>
        <div class="foot">
          <span class="fill">1 Layer</span>
          ${iconButton("export", "Collect for export", 9)}
          ${iconButton("search", "Locate object", 9)}
          ${iconButton("clip", "Make clipping mask", 9)}
          ${iconButton("sublayer", "New sublayer", 10)}
          ${iconButton("add", "New layer", 9)}
          ${iconButton("trash", "Delete", 9, "dim")}
        </div>
      </section>
    </div>`;
  }

  private renderDocument() {
    return html`<main class="doc">
      <div class="doctabs">
        <div class="doctab">Untitled-1* @ 31.46 % (RGB/Preview) ${iconButton("close", "Close document", 9)}</div>
      </div>
      <div class="work">
        <div class="canvas"><div class="artboard"><span class="art">download mo na!!!!</span></div></div>
        <div class="vbar">${icon("up", 9)}<span class="vthumb"></span>${icon("chevron", 9)}</div>
      </div>
      <div class="status">
        ${drop("Zoom", "31.46%", "w48")}
        <span class="pager dim">${iconButton("first", "First artboard", 8)}${iconButton("prev", "Previous artboard", 8)}</span>
        ${drop("Artboard", "1", "w37")}
        <span class="pager dim">${iconButton("next", "Next artboard", 8)}${iconButton("last", "Last artboard", 8)}</span>
        <span class="mode">Type</span>
        ${iconButton("play", "Status menu", 8, "play")}
        <div class="hbar">${icon("left", 9)}<span class="hthumb"></span>${icon("right", 9)}</div>
      </div>
    </main>`;
  }

  private renderDockA() {
    return html`<div class="col dock-a">
      <div class="dockhead end">${icon("expand", 6)}</div>
      <section class="panel">
        <div class="tabs">${this.tab("Align", true, true)}${this.tab("Appearance")}${iconButton("menu", "Align menu", 10)}</div>
        <div class="lab first">Align Objects:</div>
        <div class="icons rule">
          ${iconButton("alLeft", "Align left", 11)}${iconButton("alHc", "Align horizontal center", 11)}${iconButton("alRight", "Align right", 11)}
          <span class="fill"></span>
          ${iconButton("alTop", "Align top", 11)}${iconButton("alVc", "Align vertical center", 11)}${iconButton("alBot", "Align bottom", 11)}
        </div>
        <div class="lab first">Distribute Objects:</div>
        <div class="icons rule">
          ${iconButton("diTop", "Distribute top", 12)}${iconButton("diVc", "Distribute vertical center", 12)}${iconButton("diBot", "Distribute bottom", 12)}
          <span class="fill"></span>
          ${iconButton("diLeft", "Distribute left", 12)}${iconButton("diHc", "Distribute horizontal center", 12)}${iconButton("diRight", "Distribute right", 12)}
        </div>
        <div class="lab first"><span>Distribute Spacing:</span><span>Align To:</span></div>
        <div class="icons spacing">
          ${iconButton("spV", "Vertical distribute space", 11, "first")}${iconButton("spH", "Horizontal distribute space", 11)}
          ${iconButton("updown", "Spacing step", 9, "s dim")}
          <input class="field w37 dim" type="text" value="0 px" aria-label="Spacing" disabled />
          <span class="fill"></span>
          ${iconButton("alignTo", "Align to", 11, "s")}${icon("chevron", 9)}
        </div>
      </section>

      <section class="panel">
        <div class="tabs">${this.tab("Transform")}${this.tab("Pathfinder", true)}${iconButton("menu", "Pathfinder menu", 10)}</div>
        <div class="lab first">Shape Modes:</div>
        <div class="icons pf">
          ${iconButton("unite", "Unite", 11)}${iconButton("minus", "Minus front", 11)}${iconButton("intersect", "Intersect", 11)}${iconButton("exclude", "Exclude", 11)}
          <button class="expandbtn" disabled>Expand</button>
        </div>
        <div class="lab">Pathfinders:</div>
        <div class="icons pf second">
          ${iconButton("divide", "Divide", 11)}${iconButton("trim", "Trim", 11)}${iconButton("merge", "Merge", 11)}${iconButton("crop", "Crop", 11)}${iconButton("outline", "Outline", 11)}${iconButton("back", "Minus back", 11)}
        </div>
      </section>

      <section class="panel">
        <div class="tabs">${this.tab("Color Guide")}${this.tab("Color", true, true)}${iconButton("menu", "Color menu", 10)}</div>
        <div class="color">
          <div>
            <div class="pair">${icon("defaults", 9)}${icon("swap", 8)}</div>
            ${this.swatches()}
          </div>
          <div>${this.channel("R", "#e60f0f")}${this.channel("G", "#18c81c")}${this.channel("B", "#1414e0")}</div>
        </div>
        <div class="hexrow">
          <button class="chip none" aria-label="None"></button>
          <button class="chip black" aria-label="Black"></button>
          <button class="chip white" aria-label="White"></button>
          <label for="hex">#</label><input id="hex" class="field w37" type="text" value="000000" />
        </div>
        <div class="spectrum"></div>
      </section>
      <section class="panel grow"></section>
    </div>`;
  }

  private renderProperties() {
    return html`<section class="panel grow">
      <div class="tabs tight">
        ${this.tab("Swatc")}${this.tab("Properties", true)}${this.tab("Brush")}${this.tab("Symb")}${this.tab("Librar")}
      </div>
      <div class="scroller">
        <div class="props">
          <div class="sec"><div class="head">Characters</div></div>
          <div class="sec">
            <div class="head low">Transform</div>
            <div class="xf">
              <span class="ref">${icon("refpoint", 13)}</span>
              <label for="x">X:</label><input id="x" class="field" type="text" value="589.8203 p" />
              <label for="w">W:</label><input id="w" class="field" type="text" value="575.418 px" />
              <button class="ib linkb" aria-label="Constrain proportions">${icon("link", 12)}</button>
              <label for="y">Y:</label><input id="y" class="field" type="text" value="911.2014 p" />
              <label for="h">H:</label><input id="h" class="field" type="text" value="78.2642 px" />
              <span class="ang">${icon("angle", 9)}</span>${drop("Rotation", "0º")}
              <span class="flips">${iconButton("flipH", "Flip horizontally", 10)}${iconButton("flipV", "Flip vertically", 10)}</span>
            </div>
            ${moreRow()}
          </div>
          <div class="sec">
            <div class="head">Appearance</div>
            <div class="r"><button class="chipb black" aria-label="Fill swatch"></button>Fill</div>
            <div class="r">
              <button class="chipb none hollow" aria-label="Stroke swatch"></button>
              <span class="nm"><a class="link" href="#stroke">Stroke</a></span>
              ${this.step("Stroke weight step")}${drop("Stroke weight", "", "w34")}
            </div>
            <div class="r">
              <button class="chipb checker" aria-label="Opacity swatch"></button>
              <span class="nm"><a class="link" href="#opacity">Opacity</a></span>
              ${drop("Opacity", "100%", "w46", false, "right")}
            </div>
            <div class="r effects"><button class="fx">fx.</button></div>
            <div class="more short">${iconButton("dots", "More options", 10)}</div>
          </div>
          <div class="sec">
            <div class="head">Character</div>
            <div class="fontdrop">${icon("search", 8)}${icon("chevron", 7)}${drop("Font family", "Myriad Pro", "bold")}</div>
            <div class="fontdrop">${drop("Font style", "Regular", "bold")}</div>
            <div class="ch">
              ${icon("size", 12)}${this.step("Font size step")}${drop("Font size", "72 pt")}<span></span>
              ${icon("leading", 12)}${this.step("Leading step")}${drop("Leading", "(86.4 pt)")}
            </div>
            <div class="ch">
              ${icon("kerning", 12)}${this.step("Kerning step")}${drop("Kerning", "Auto")}<span></span>
              ${icon("tracking", 12)}${this.step("Tracking step")}${drop("Tracking", "0")}
            </div>
            ${moreRow()}
          </div>
          <div class="sec">
            <div class="head">Paragraph</div>
            <div class="para">
              ${iconButton("pLeft", "Align left", 12, "on")}${iconButton("pCenter", "Align center", 12)}${iconButton("pRight", "Align right", 12)}
              ${iconButton("pJust", "Justify, last line left", 12)}${iconButton("pJustC", "Justify, last line centered", 12)}${iconButton("pJustR", "Justify, last line right", 12)}${iconButton("pJustA", "Justify all", 12)}
            </div>
            ${moreRow()}
          </div>
          <div class="head">Align</div>
        </div>
        <div class="sbar">${icon("up", 8)}<span class="th"></span>${icon("chevron", 8)}</div>
      </div>
    </section>`;
  }

  private renderStroke() {
    return html`<section class="panel stroke">
      <div class="tabs">${this.tab("Stroke", true, true)}${this.tab("Transparency")}${iconButton("menu", "Stroke menu", 10)}</div>
      <div class="g live"><span class="l">Weight:</span>${this.step("Weight step")}${drop("Weight", "", "w46")}</div>
      <div class="g"><span class="l">Cap:</span>${iconButton("capButt", "Butt cap", 9)}${iconButton("capRound", "Round cap", 9)}${iconButton("capSquare", "Projecting cap", 9)}</div>
      <div class="g"><span class="l">Corner:</span>${iconButton("corMiter", "Miter join", 9)}${iconButton("corRound", "Round join", 9)}${iconButton("corBevel", "Bevel join", 9)}
        <span class="tail"><label for="limit">Limit:</label><input id="limit" class="ghost w24" type="text" disabled /><span>x</span></span></div>
      <div class="g"><span class="l">Align Stroke:</span>${iconButton("strC", "Align center", 9)}${iconButton("strI", "Align inside", 9)}${iconButton("strO", "Align outside", 9)}</div>
      <div class="dash">
        <label><input type="checkbox" />Dashed Line</label>
        <span class="dashicons"><button aria-label="Preserve exact lengths"></button><button aria-label="Align dashes to corners"></button></span>
      </div>
      <div class="six">${["dash", "gap", "dash", "gap", "dash", "gap"].map((n) => html`<label><input type="text" disabled />${n}</label>`)}</div>
      <div class="g heads"><span class="l">Arrowheads:</span>${drop("Start arrowhead", "", "off arrowhead", true)}${drop("End arrowhead", "", "off arrowhead", true)}
        <span class="tail">${icon("exchange", 10)}</span></div>
      <div class="g"><span class="l">Scale:</span>
        <span class="scales">
          <span>${this.step("Start scale step")}<input class="ghost w29" type="text" value="100%" aria-label="Start scale" disabled /></span>
          <span>${this.step("End scale step")}<input class="ghost w29" type="text" value="100%" aria-label="End scale" disabled /></span>
        </span>
        <span class="tail">${icon("unlink", 11)}</span></div>
      <div class="g t"><span class="l">Align:</span>${iconButton("arrowA", "Arrow tip beyond path", 9)}${iconButton("arrowB", "Arrow tip at path end", 9)}</div>
      <div class="g profilerow"><span class="l">Profile:</span>${drop("Profile", "", "off profile", true)}
        <span class="tail">${icon("flipH", 10)}${icon("flipV", 10)}</span></div>
    </section>`;
  }

  render() {
    return html`<div class="frame">
      <div class="window">
        ${this.renderMenubar()}
        <div class="main">
          ${this.renderTools()}${this.renderLayers()}${this.renderDocument()}${this.renderDockA()}
          <div class="col dock-b">
            <div class="dockhead end">${icon("expand", 6)}</div>
            ${this.renderProperties()}${this.renderStroke()}
          </div>
        </div>
      </div>
      <div class="desktop"></div>
    </div>`;
  }
}
